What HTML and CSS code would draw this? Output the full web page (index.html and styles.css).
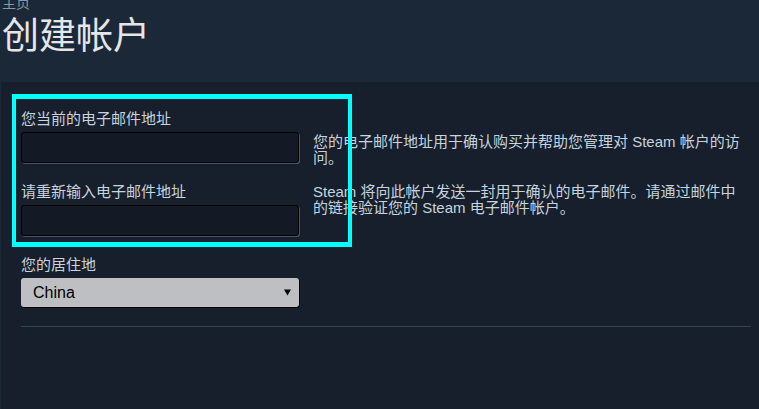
FILE: index.html
```html
<!DOCTYPE html>
<html lang="zh-CN">
<head>
<meta charset="utf-8">
<title>创建帐户</title>
<link rel="stylesheet" href="styles.css">
</head>
<body>
<div class="header">
  <div class="crumb">主页</div>
  <h1 class="title">创建帐户</h1>
</div>
<div class="panel">
  <div class="form">
    <div class="fields">
      <label class="label">您当前的电子邮件地址</label>
      <div class="input"></div>
      <label class="label">请重新输入电子邮件地址</label>
      <div class="input"></div>
    </div>
    <div class="help">
      <p class="para">您的电子邮件地址用于确认购买并帮助您管理对 Steam 帐户的访问。</p>
      <p class="para">Steam 将向此帐户发送一封用于确认的电子邮件。请通过邮件中的链接验证您的 Steam 电子邮件帐户。</p>
    </div>
  </div>
  <div class="country">
    <label class="label">您的居住地</label>
    <div class="select">
      <span class="select-text">China</span>
      <svg class="arrow" width="7" height="7" viewBox="0 0 7 7"><polygon points="0,0.5 7,0.5 3.5,6.5" fill="#000"/></svg>
    </div>
  </div>
  <div class="rule"></div>
</div>
<div class="highlight"></div>
</body>
</html>
```

FILE: styles.css
```css
html, body {
  margin: 0;
  padding: 0;
}
body {
  background: #1b2838;
  font-family: "Liberation Sans", "Noto Sans CJK SC", sans-serif;
  width: 759px;
  height: 409px;
  overflow: hidden;
  position: relative;
}
.header {
  display: flow-root;
  height: 82px;
  padding-left: 2px;
  box-sizing: border-box;
}
.crumb {
  font-size: 14px;
  line-height: 16px;
  color: #8f98a0;
  margin-top: -5px;
}
.title {
  margin: 4px 0 0 0;
  font-weight: normal;
  font-size: 37px;
  line-height: 44px;
  color: #e4e6e8;
}
.panel {
  margin-left: 1px;
  background: #171f2c;
  height: 327px;
  box-sizing: border-box;
  padding: 29px 8px 0 20px;
}
.form {
  display: flex;
  gap: 14px;
}
.fields {
  width: 278px;
  display: flex;
  flex-direction: column;
}
.label {
  display: block;
  font-size: 15px;
  line-height: 16px;
  color: #c6d4df;
  margin-bottom: 5px;
}
.input {
  height: 31px;
  box-sizing: border-box;
  border: 1px solid #000;
  border-radius: 3px;
  background: #131a25;
  box-shadow: 1px 1px 0 #45556c;
  margin-bottom: 21px;
}
.help {
  width: 432px;
  padding-top: 23px;
}
.para {
  margin: 0 0 18px 0;
  font-size: 15px;
  line-height: 16px;
  color: #c6d4df;
}
.country {
  width: 278px;
}
.select {
  height: 29px;
  box-sizing: border-box;
  border-radius: 3px;
  background: #bdbfc2;
  box-shadow: 1px 1px 0 #000;
  display: flex;
  align-items: center;
  justify-content: space-between;
  padding: 0 8px 0 12px;
}
.select-text {
  font-size: 16px;
  color: #000;
}
.arrow {
  display: block;
}
.rule {
  margin-top: 19px;
  height: 1px;
  background: #2e4556;
}
.highlight {
  position: absolute;
  left: 12px;
  top: 94px;
  width: 332px;
  height: 143px;
  border-style: solid;
  border-color: #00ffff;
  border-width: 5px 4px;
}
```
